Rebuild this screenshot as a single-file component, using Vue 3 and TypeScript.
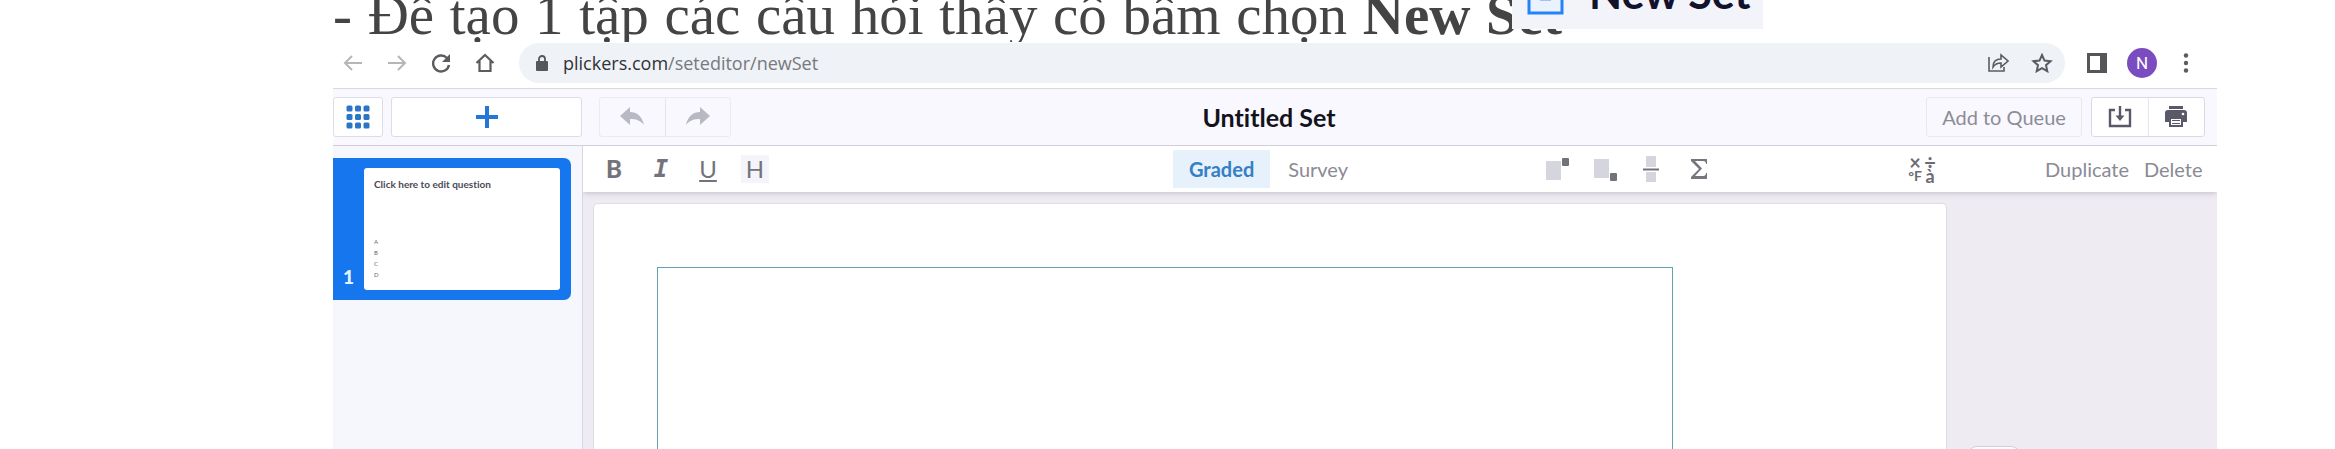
<script setup lang="ts">
import { ref } from 'vue'

type Mode = 'Graded' | 'Survey'
const modes: Mode[] = ['Graded', 'Survey']
const mode = ref<Mode>('Graded')
const answers = ['A', 'B', 'C', 'D']
</script>

<template>
  <div class="page">
    <div class="instruction">
      <p>- Để tạo 1 tập các câu hỏi thầy cô bấm chọn <b>New Set</b></p>
      <div class="chip">
        <svg width="38" height="30" viewBox="0 0 38 30"><rect x="2" y="-14" width="33" height="27" fill="#e9f2fd" stroke="#2483f7" stroke-width="3" /><path d="M13 0h11" stroke="#9cc4f5" stroke-width="2" /></svg>
        <span>New Set</span>
      </div>
    </div>

    <div class="browser">
      <button class="nav faded" aria-label="Back"><svg width="20" height="20" viewBox="0 0 20 20"><path d="M19 10H2M9 3l-7 7 7 7" /></svg></button>
      <button class="nav faded" aria-label="Forward"><svg width="20" height="20" viewBox="0 0 20 20"><path d="M1 10h17M11 3l7 7-7 7" /></svg></button>
      <button class="nav" aria-label="Reload"><svg width="20" height="20" viewBox="0 0 20 20"><path d="M16 5a8 8 0 1 0 2 7" stroke-width="2.4" /><path d="M19 1v8h-8z" fill="#5b5c60" stroke="none" /></svg></button>
      <button class="nav" aria-label="Home"><svg width="20" height="20" viewBox="0 0 20 20"><path d="M1.500 10L10 2l8.500 8M4.500 8v10h11V8" stroke-width="2.200" /></svg></button>
      <div class="address">
        <svg width="14" height="16" viewBox="0 0 14 16"><rect x="1" y="6" width="12" height="10" rx="1" fill="#55575b" /><path d="M4 7V4a3 3 0 0 1 6 0v3" fill="none" stroke="#55575b" stroke-width="1.800" /></svg>
        <span class="url">plickers.com<i>/seteditor/newSet</i></span>
        <button class="nav" aria-label="Share"><svg width="22" height="20" viewBox="0 0 22 20"><path d="M2 4v14h15v-4M6 14c0-5 3-8 8-8V2l7 6-7 6v-4c-4 0-6 1-8 4z" stroke-width="1.600" /></svg></button>
        <button class="nav" aria-label="Bookmark"><svg width="22" height="20" viewBox="0 0 22 20"><path d="M11 2l2.500 5.600 6 .600-4.500 4 1.300 6L11 15.200 5.700 18.200l1.300-6-4.500-4 6-.600z" stroke-width="2" /></svg></button>
      </div>
      <button class="nav" aria-label="Side panel"><svg width="20" height="20" viewBox="0 0 20 20"><path d="M0 0h20v20H0zM3 3v14h10V3z" fill="#55565a" fill-rule="evenodd" stroke="none" /></svg></button>
      <button class="avatar" aria-label="Profile">N</button>
      <button class="nav" aria-label="Menu"><svg width="6" height="20" viewBox="0 0 6 20"><g fill="#5b5c60" stroke="none"><circle cx="3" cy="2.500" r="2.200" /><circle cx="3" cy="10" r="2.200" /><circle cx="3" cy="17.500" r="2.200" /></g></svg></button>
    </div>

    <div class="editor">
      <header class="header">
        <div class="left">
          <button class="box grid-btn" aria-label="All sets">
            <svg width="24" height="24" viewBox="0 0 24 24"><g fill="#2b74c6"><template v-for="r in 3" :key="r"><rect v-for="c in 3" :key="c" :x="(c - 1) * 8.500 + 0.500" :y="(r - 1) * 8.500 + 0.500" width="6" height="6" rx="1.500" /></template></g></svg>
          </button>
          <button class="box add-btn" aria-label="Add question"><svg width="24" height="24" viewBox="0 0 24 24"><path d="M12 1v22M1 12h22" stroke="#2277d8" stroke-width="4" /></svg></button>
          <div class="pair history">
            <button aria-label="Undo"><svg width="26" height="20" viewBox="0 0 26 20"><path d="M1 9L11 0v5c7 0 12 4 14 13-4-5-8-6-14-6v6z" fill="#b9b9c3" /></svg></button>
            <button aria-label="Redo"><svg width="26" height="20" viewBox="0 0 26 20"><path d="M25 9L15 0v5C8 5 3 9 1 18c4-5 8-6 14-6v6z" fill="#b9b9c3" /></svg></button>
          </div>
        </div>
        <h1>Untitled Set</h1>
        <div class="right">
          <button class="queue">Add to Queue</button>
          <div class="pair files">
            <button aria-label="Download"><svg width="24" height="22" viewBox="0 0 24 22"><path d="M7 4H2v16h20V4h-5M12 0v12" fill="none" stroke="#5a5967" stroke-width="2.400" /><path d="M7.500 9.500h9L12 15z" fill="#5a5967" /></svg></button>
            <button aria-label="Print"><svg width="24" height="22" viewBox="0 0 24 22"><path d="M5 0h14v3H5zM4 4h16a3 3 0 0 1 3 3v9h-4v-5H5v5H1V7a3 3 0 0 1 3-3z" fill="#5a5967" /><path d="M6 12h12v8H6z" fill="#fff" stroke="#5a5967" stroke-width="2" /><path d="M8 14.500h8M8 17.500h8" stroke="#5a5967" stroke-width="1.200" /><circle cx="19" cy="8" r="1.300" fill="#fff" /></svg></button>
          </div>
        </div>
      </header>

      <div class="body">
        <aside class="sidebar">
          <div class="slide">
            <span class="number">1</span>
            <div class="thumb">
              <strong>Click here to edit question</strong>
              <ul><li v-for="a in answers" :key="a">{{ a }}</li></ul>
            </div>
          </div>
        </aside>

        <main class="main">
          <div class="toolbar">
            <div class="formats">
              <button aria-label="Bold" class="bold">B</button>
              <button aria-label="Italic" class="italic">I</button>
              <button aria-label="Underline" class="underline">U</button>
              <button aria-label="Highlight" class="highlight">H</button>
            </div>
            <div class="modes">
              <button v-for="m in modes" :key="m" :class="{ active: mode === m }" @click="mode = m">{{ m }}</button>
            </div>
            <div class="maths">
              <button aria-label="Superscript"><svg width="24" height="26" viewBox="0 0 24 26"><rect x="0" y="5" width="15" height="19" fill="#d5d5de" /><rect x="16" y="2" width="7" height="8" rx="1" fill="#737279" /></svg></button>
              <button aria-label="Subscript"><svg width="24" height="26" viewBox="0 0 24 26"><rect x="0" y="3" width="15" height="19" fill="#d5d5de" /><rect x="16" y="17" width="7" height="8" rx="1" fill="#737279" /></svg></button>
              <button aria-label="Fraction"><svg width="18" height="26" viewBox="0 0 18 26"><rect x="4" y="0" width="10" height="11" fill="#d5d5de" /><rect x="4" y="16" width="10" height="10" fill="#d5d5de" /><path d="M1 13.500h16" stroke="#737279" stroke-width="2" /></svg></button>
              <button aria-label="Equation"><svg width="18" height="22" viewBox="0 0 18 22"><path d="M1 1h16v5h-1c0-2-1-3-3-3H5l7 7.500L5 18h8c2 0 3-1 3-3h1v6H1v-2l8-8-8-8z" fill="#77767f" /></svg></button>
            </div>
            <button class="symbols" aria-label="Symbols"><span class="sign">×</span><span class="sign">÷</span><span class="small">°F</span><span>à</span></button>
            <div class="actions"><button>Duplicate</button><button>Delete</button></div>
          </div>
          <div class="canvas">
            <div class="sheet"><div class="question"></div></div>
            <div class="rail"><button aria-label="Slide options"></button></div>
          </div>
        </main>
      </div>
    </div>
  </div>
</template>

<style>
body { margin: 0; background: #fff; }
</style>

<style scoped>
* { box-sizing: border-box; }
.page {
  height: 100vh;
  min-height: 449px;
  overflow: hidden;
  display: flex;
  flex-direction: column;
  padding: 0 118px 0 333px;
  font-family: Lato, "Liberation Sans", sans-serif;
  font-variant-ligatures: none;
}
button { font: inherit; color: inherit; background: none; border: 0; padding: 0; display: flex; align-items: center; justify-content: center; }
svg { display: block; flex: none; }

.instruction { position: relative; height: 42px; flex: none; overflow: hidden; }
.instruction p {
  width: 1229px;
  margin: -17px 0 0;
  font-family: "Liberation Serif", "Times New Roman", serif;
  font-size: 57px;
  line-height: 64px;
  color: #444;
  white-space: nowrap;
  text-align-last: justify;
}
.chip {
  position: absolute;
  left: 1179px;
  top: 0;
  height: 29px;
  width: 251px;
  padding-left: 15px;
  display: flex;
  gap: 24px;
  overflow: hidden;
  background: #f3f3fa;
}
.chip span { font: 700 43px/50px Lato, sans-serif; margin-top: -32px; color: #12122c; white-space: nowrap; }

.browser { height: 46px; flex: none; display: flex; align-items: flex-start; padding: 1px 28px 0 10px; }
.nav { height: 40px; }
.nav svg { fill: none; stroke: #5b5c60; stroke-width: 2; }
.nav.faded svg { stroke: #b5b6b9; }
.browser > .nav:nth-child(-n + 4) { margin-right: 24px; }
.address {
  flex: 1;
  height: 40px;
  display: flex;
  align-items: center;
  gap: 22px;
  padding: 0 12px 0 16px;
  margin-right: 22px;
  border-radius: 20px;
  background: #eff2f6;
}
.url { flex: 1; margin-left: -8px; font: 18px/24px "Open Sans", sans-serif; color: #303236; }
.url i { font-style: normal; color: #77797e; }
.avatar { width: 30px; height: 30px; margin: 5px 26px 0 20px; border-radius: 50%; background: #7b4cc0; color: #fff; font: 17px/20px Roboto, sans-serif; }

.editor { flex: 1; min-height: 0; display: flex; flex-direction: column; border-top: 1px solid #d9d9de; background: #f8f8fe; }
.header {
  height: 57px;
  flex: none;
  display: grid;
  grid-template-columns: 1fr auto 1fr;
  align-items: center;
  padding-right: 12px;
  padding-bottom: 1px;
  border-bottom: 1px solid #d0cfd9;
}
.left, .right { display: flex; align-items: center; }
.right { justify-content: flex-end; gap: 9px; }
.box { height: 40px; border: 1px solid #dedde6; border-radius: 3px; background: #fff; }
.grid-btn { width: 50px; margin-right: 8px; }
.add-btn { width: 191px; margin-right: 17px; }
.pair { display: flex; height: 40px; border: 1px solid #ebebf2; border-radius: 3px; }
.pair button { flex: 1; }
.pair button + button { border-left: 1px solid #e5e5ed; }
.history { width: 132px; }
.files { width: 114px; background: #fff; border-color: #dbdae4; }
.queue { width: 156px; height: 40px; border: 1px solid #e8e8ef; border-radius: 3px; font-size: 20px; color: #8d8c96; }
h1 { margin: 0; font-size: 25px; line-height: 32px; font-weight: 700; color: #14131c; }

.body { flex: 1; min-height: 0; display: flex; }
.sidebar { width: 250px; flex: none; padding-top: 12px; border-right: 1px solid #d8d7e0; background: #f6f6fd; }
.slide { width: 238px; height: 142px; padding: 10px 11px 10px 0; display: flex; border-radius: 0 7px 7px 0; background: #1576ee; }
.number { width: 31px; padding-left: 10px; align-self: flex-end; font-size: 19px; line-height: 26px; font-weight: 900; color: #e3f3ff; }
.thumb { flex: 1; padding: 9px 10px; border-radius: 3px; background: #fff; white-space: nowrap; }
.thumb strong { display: block; font-size: 10px; line-height: 14px; color: #4a4a56; }
ul { list-style: none; margin: 45px 0 0; padding: 0; font-size: 6px; line-height: 11px; color: #666; }

.main { flex: 1; min-width: 0; display: flex; flex-direction: column; overflow: hidden; }
.toolbar {
  height: 46px;
  flex: none;
  display: grid;
  grid-template-columns: 590fr 373fr 361fr 138fr 172px;
  align-items: center;
  background: #fff;
  box-shadow: 0 1px 6px #bfbdcb;
  position: relative;
  font-size: 20px;
  color: #8b8a94;
}
.toolbar > div { display: flex; align-items: center; }
.formats { padding-left: 17px; gap: 19px; color: #74737c; font-size: 24px; line-height: 26px; }
.formats button { width: 28px; height: 28px; }
.bold { font-weight: 900; }
.italic { font: italic 700 24px/26px "DejaVu Sans Mono", monospace; }
.underline { text-decoration: underline; }
.highlight { background: #f3f5fa; }
.modes { gap: 2px; }
.modes button { height: 38px; padding: 0 16px; }
.modes .active { background: #e7f1fc; color: #357fc5; font-weight: 700; }
.maths { gap: 24px; }
.maths button:last-child { margin-left: 6px; }
.symbols { display: grid; width: 30px; grid-template-columns: 16px 14px; color: #6c6b74; font-size: 18px; line-height: 14px; font-weight: 700; }
.symbols .sign { font-size: 20px; }
.symbols .small { font-size: 14px; }
.actions { gap: 15px; }

.canvas { flex: 1; min-height: 0; display: flex; padding: 11px 0 0 10px; background: #efebf2; overflow: hidden; }
.sheet { flex: 1; padding: 63px 273px 0 63px; background: #fff; border: 1px solid #dddce4; border-bottom: 0; border-radius: 5px 5px 0 0; }
.question { height: 100%; border: 1px solid #64a3b6; border-bottom: 0; }
.rail { width: 270px; padding: 243px 0 0 20px; }
.rail button { width: 54px; height: 40px; border: 1px solid #d0ced8; border-radius: 10px; background: #fff; }
</style>
